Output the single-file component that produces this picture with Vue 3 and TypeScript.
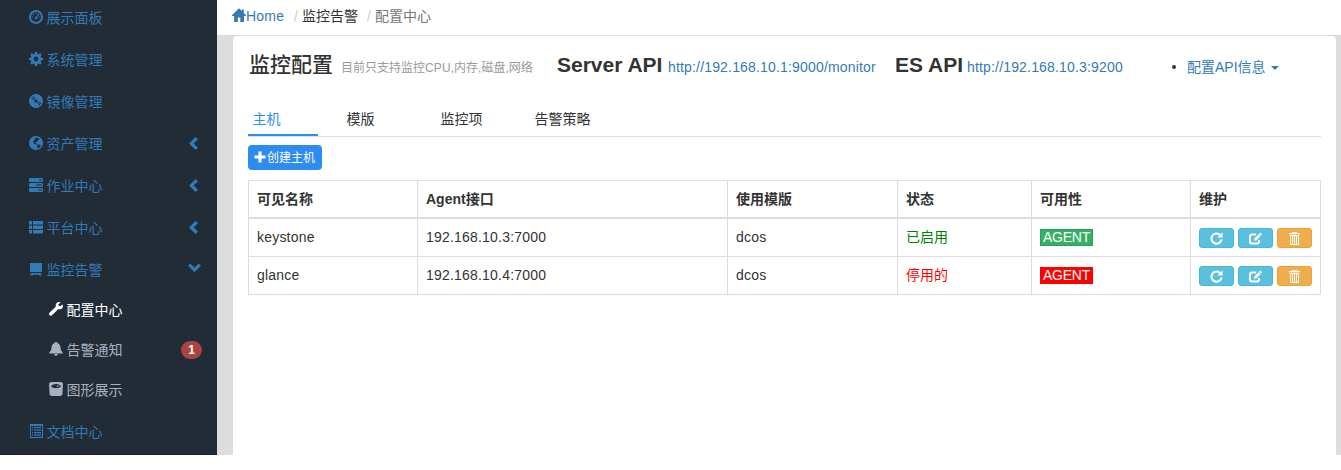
<script setup lang="ts">
interface MenuItem {
  label: string
  icon: string
  arrow?: 'left' | 'down'
  children?: { label: string; icon: string; active?: boolean; badge?: number }[]
}

const icons: Record<string, string> = {
  dashboard:
    'M7 0a7 7 0 1 0 0 14A7 7 0 0 0 7 0zm0 1.900a5.100 5.100 0 1 1 0 10.200A5.100 5.100 0 0 1 7 1.900zM6.500 2.600h1v1.400h-1zM3.500 4.200l.8-.7 1 1-.8.8zM2.600 6.600h1.400v1H2.600zM10 6.600h1.400v1H10zM9.300 3.500l.9.5-1.900 3.300a1.300 1.300 0 1 1-1-.6z',
  cog: 'M5.900 0h2.200l.4 2 1 .4 1.700-1.100 1.500 1.500-1.100 1.700.4 1 2 .4v2.200l-2 .4-.4 1 1.100 1.700-1.500 1.500-1.700-1.100-1 .4-.4 2H5.900l-.4-2-1-.4-1.700 1.100-1.500-1.500 1.100-1.700-.4-1-2-.4V5.900l2-.4.4-1L1.300 2.800l1.500-1.500 1.700 1.100 1-.4zM7 4.600a2.400 2.400 0 1 0 0 4.800 2.400 2.400 0 0 0 0-4.800z',
  cd: 'M7 0a7 7 0 1 0 0 14A7 7 0 0 0 7 0zm0 5.200a1.800 1.800 0 1 1 0 3.600 1.800 1.800 0 0 1 0-3.600zM2 4.600l.7-1 2.400 1.700-.6.8zM3.500 2.800l.8-.7 1.800 2.300-.7.5zM8.500 9.500l.8-.6 2 2.200-.9.7zM9.600 8.400l.4-.8 2.400 1.600-.5.9z',
  globe:
    'M7 0a7 7 0 1 0 0 14A7 7 0 0 0 7 0zM6.200 2.200l1.500-.7 2.400 1.100.3 1.100-1.500.5-.6 1.300-1.300.4-.5 1.200 1.400.9-.4.7-2-.7-1.200-1.700.4-2.100 1-.5zM8 8.800l2.300-.4 1.500.8-.7 1.800-1.900 1.400-1-.7.4-1.300z',
  tasks:
    'M.8 0h12.400l.8.8v2.400l-.8.8H.8L0 3.200V.8zM10 1.400v1h3v-1zM.8 5h12.400l.8.8v2.400l-.8.8H.8L0 8.200V5.800zM7 6.400v1h6v-1zM.8 10h12.400l.8.8v2.400l-.8.8H.8L0 13.200v-2.400zM9 11.400v1h4v-1z',
  list: 'M0 1h3v3.400H0zM4 1h10v3.400H4zM0 5.400h3v3.500H0zM4 5.400h10v3.500H4zM0 10h3v3.500H0zM4 10h10v3.500H4z',
  board: 'M1 1h12v9H1zM1 11h12v.8h-2l2 2h-2.200l-1-1H4.200l-1 1H1l2-2H1z',
  wrench:
    'M13.500 2.500l-2.300 1.700-1.500-.4-.3-1.500L11.600.4C9.700-.4 7.600.4 6.900 2.200c-.3.8-.3 1.600 0 2.300L.7 10.500c-.9.9-.9 1.900-.2 2.700.8.8 1.900.8 2.700-.1l6.200-6c1.900.6 3.900-.3 4.500-2.200.2-.8.1-1.600-.4-2.400z',
  bell: 'M7 0c.7 0 1.200.4 1.300 1 1.800.6 2.800 2 3.100 4l.5 3 1.800 2.500v.9H.3v-.9L2.100 8l.5-3c.3-2 1.300-3.400 3.100-4 .1-.6.6-1 1.300-1zM5.100 12h3.800c-.3 1.200-.9 1.800-1.900 1.800S5.400 13.200 5.100 12z',
  scale:
    'M2 0h10.500L14 1.500l-.6 10.500c-.2 1.300-1 2-2.100 2H2.700c-1.300 0-2-.7-2.100-2L0 1.500zM7.200 2C4.300 2 2.500 3.200 2.200 4.500c.8 1 2.400 1.700 4.800 1.700s4-.8 4.700-1.700C11.400 3.100 9.800 2 7.200 2zM7.200 4.400l2-1.500.7.7-1.600 1.300z',
  doc: 'M1 0h13v14H1zM2 2v11h11V2zM3 3h1v1.200H3zM5 3h7v1.200H5zM3 5.500h1v1.200H3zM5 5.500h7v1.200H5zM3 8h1v1.200H3zM5 8h7v1.200H5zM3 10.500h1v1.200H3zM5 10.500h7v1.200H5z',
  home: 'M7 .2L0 7.300v.8h2.100V14h3.700V9.500h2.500V14H12V8.100h2v-.8l-2.200-2.200V1.400H9.900v1.700z',
}

const menu: MenuItem[] = [
  { label: '展示面板', icon: 'dashboard' },
  { label: '系统管理', icon: 'cog' },
  { label: '镜像管理', icon: 'cd' },
  { label: '资产管理', icon: 'globe', arrow: 'left' },
  { label: '作业中心', icon: 'tasks', arrow: 'left' },
  { label: '平台中心', icon: 'list', arrow: 'left' },
  {
    label: '监控告警',
    icon: 'board',
    arrow: 'down',
    children: [
      { label: '配置中心', icon: 'wrench', active: true },
      { label: '告警通知', icon: 'bell', badge: 1 },
      { label: '图形展示', icon: 'scale' },
    ],
  },
  { label: '文档中心', icon: 'doc' },
]

const tabs = ['主机', '模版', '监控项', '告警策略']

const hosts = [
  { name: 'keystone', agent: '192.168.10.3:7000', template: 'dcos', status: '已启用', on: true },
  { name: 'glance', agent: '192.168.10.4:7000', template: 'dcos', status: '停用的', on: false },
]
</script>

<template>
  <div class="page">
    <nav class="sidebar">
      <template v-for="item in menu" :key="item.label">
        <a class="item">
          <svg class="icon" viewBox="0 0 14 14"><path :d="icons[item.icon]" fill-rule="evenodd" /></svg>
          <span class="label">{{ item.label }}</span>
          <svg v-if="item.arrow === 'left'" class="arrow left" viewBox="0 0 10 13">
            <path d="M6.500 0L0 6.500 6.500 13 9 10.700 4.700 6.500 9 2.300z" />
          </svg>
          <svg v-if="item.arrow === 'down'" class="arrow down" viewBox="0 0 13 10">
            <path d="M0 2.700L2.300.4l4.200 4.200L10.700.4 13 2.700 6.500 9.300z" />
          </svg>
        </a>
        <a v-for="sub in item.children" :key="sub.label" class="item sub" :class="{ active: sub.active }">
          <svg class="icon" viewBox="0 0 14 14"><path :d="icons[sub.icon]" fill-rule="evenodd" /></svg>
          <span class="label">{{ sub.label }}</span>
          <span v-if="sub.badge" class="badge">{{ sub.badge }}</span>
        </a>
      </template>
    </nav>

    <main class="main">
      <header class="crumbs">
        <svg class="icon" viewBox="0 0 14 14"><path :d="icons.home" fill-rule="evenodd" /></svg>
        <a class="link">Home</a>
        <span class="slash first">/</span>
        <span class="parent">监控告警</span>
        <span class="slash">/</span>
        <span class="current">配置中心</span>
      </header>

      <section class="panel">
        <div class="heading">
          <h3 class="title">监控配置</h3>
          <small class="note">目前只支持监控<i>CPU,</i>内存,磁盘,网络</small>
          <h3 class="server">Server API</h3>
          <a class="url server-url">http://192.168.10.1:9000/monitor</a>
          <h3 class="es">ES API</h3>
          <a class="url es-url">http://192.168.10.3:9200</a>
          <span class="bullet"></span>
          <a class="config">配置API信息</a>
          <span class="caret"></span>
        </div>

        <div class="tabs">
          <a v-for="(tab, i) in tabs" :key="tab" class="tab" :class="{ selected: i === 0 }">{{ tab }}</a>
        </div>

        <button class="create">
          <svg viewBox="0 0 12 12"><path d="M4.400.5h3.200v3.900h3.900v3.200H7.600v3.900H4.400V7.600H.5V4.400h3.900z" /></svg>
          <span>创建主机</span>
        </button>

        <table class="hosts">
          <colgroup>
            <col class="c1" /><col class="c2" /><col class="c3" /><col class="c4" /><col class="c5" /><col class="c6" />
          </colgroup>
          <thead>
            <tr>
              <th>可见名称</th>
              <th>Agent接口</th>
              <th>使用模版</th>
              <th>状态</th>
              <th>可用性</th>
              <th>维护</th>
            </tr>
          </thead>
          <tbody>
            <tr v-for="host in hosts" :key="host.name">
              <td class="text">{{ host.name }}</td>
              <td class="text">{{ host.agent }}</td>
              <td class="text">{{ host.template }}</td>
              <td class="text"><div class="status" :class="{ on: host.on }">{{ host.status }}</div></td>
              <td><div class="agent" :class="{ on: host.on }">AGENT</div></td>
              <td>
                <div class="actions">
                  <button class="act info">
                    <svg viewBox="0 0 12 12">
                      <path d="M9.400 2.700A4.700 4.700 0 1 0 10.700 7" fill="none" stroke="#fff" stroke-width="1.900" />
                      <path d="M11.600.3v4.800H6.800z" />
                    </svg>
                  </button>
                  <button class="act info">
                    <svg viewBox="0 0 13 12">
                      <path
                        d="M7 2H3Q1 2 1 4v5q0 2 2 2h5q2 0 2-2V7.600"
                        fill="none"
                        stroke="#fff"
                        stroke-width="1.900"
                      />
                      <path d="M5 8.300l.6-2.600L9.700 1.600l2 2-4.100 4.100zM10.200 1.100L11.300 0 13 1.900l-1 1.100z" />
                    </svg>
                  </button>
                  <button class="act warn">
                    <svg viewBox="0 0 13 13">
                      <path
                        fill-rule="evenodd"
                        d="M4 0h5v1h3v1.200H1V1h3zM5 .7V1h3V.7zM2 3h9v10H2zM3 4v8h1V4zM5 4v8h1V4zM7 4v8h1V4zM9 4v8h1V4z"
                      />
                    </svg>
                  </button>
                </div>
              </td>
            </tr>
          </tbody>
        </table>
      </section>
    </main>
  </div>
</template>

<style>
body {
  margin: 0;
  background: #fff;
}
</style>

<style scoped>
* {
  box-sizing: border-box;
}
.page {
  display: flex;
  width: 1341px;
  height: 455px;
  overflow: hidden;
  font: 14px/20px 'Liberation Sans', 'Noto Sans CJK SC', sans-serif;
  color: #333;
}
.sidebar {
  flex: none;
  width: 217px;
  height: 455px;
  background: #212c36;
  border-bottom: 1px solid #1a242f;
  overflow: hidden;
}
.item {
  display: flex;
  align-items: center;
  height: 42px;
  padding: 0 15px 0 29px;
  color: #337ab7;
}
.item:first-child {
  margin-top: -3px;
}
.item.sub {
  height: 40px;
  padding-left: 49px;
  padding-bottom: 2px;
  color: #a7b1c2;
}
.item.sub.active {
  color: #fff;
}
.icon {
  flex: none;
  width: 14px;
  height: 14px;
  fill: currentColor;
  margin-top: -2px;
}
.label {
  margin-left: 3.5px;
  white-space: nowrap;
}
.arrow {
  margin-left: auto;
  fill: currentColor;
}
.arrow.left {
  width: 10px;
  height: 13px;
  margin-right: 3px;
  margin-top: -2px;
}
.arrow.down {
  width: 13px;
  height: 10px;
  margin-right: 1px;
  margin-top: -5px;
}
.badge {
  margin-left: auto;
  width: 21px;
  height: 18px;
  border-radius: 9px;
  background: #a94442;
  color: #fff;
  font-size: 12px;
  font-weight: bold;
  line-height: 18px;
  text-align: center;
}
.main {
  flex: 1;
  display: flex;
  flex-direction: column;
  background: #ddd;
}
.crumbs {
  display: flex;
  align-items: center;
  height: 36px;
  padding: 0 15px 4px;
  background: #fff;
  border-bottom: 1px solid #d9dadf;
}
.crumbs .icon {
  color: #337ab7;
  margin-top: -1px;
}
.link {
  width: 46px;
  color: #337ab7;
  letter-spacing: 0.2px;
}
.slash {
  width: 16px;
  padding-left: 8px;
  color: #ccc;
}
.slash.first {
  width: 10px;
  padding-left: 2px;
}
.parent {
  width: 57px;
}
.current {
  color: #777;
}
.panel {
  flex: 1;
  margin: 0 5px 0 16px;
  padding: 0 15px;
  background: #fff;
  border-radius: 4px 4px 0 0;
}
.heading {
  display: flex;
  align-items: baseline;
  height: 67px;
  padding-top: 16px;
  white-space: nowrap;
}
h3 {
  flex: none;
  margin: 0;
  font-size: 21px;
  line-height: 26px;
}
.title {
  width: 93px;
  padding-left: 1px;
  font-weight: 500;
}
.note {
  flex: none;
  width: 216px;
  font-size: 12px;
  color: #999;
}
.note i {
  font-style: normal;
  letter-spacing: 0.1px;
}
.server {
  width: 111px;
}
.url {
  flex: none;
  color: #337ab7;
  letter-spacing: 0.17px;
}
.server-url {
  width: 227px;
}
.es {
  width: 72px;
}
.es-url {
  width: 205px;
}
.bullet {
  flex: none;
  width: 4px;
  height: 4px;
  border-radius: 2px;
  background: #333;
  margin-right: 11px;
  position: relative;
  top: -3px;
}
.config {
  flex: none;
  color: #337ab7;
  margin-right: 5px;
}
.caret {
  align-self: baseline;
  border: 4px solid transparent;
  border-top-color: #337ab7;
  border-bottom: 0;
  position: relative;
  top: -2px;
}
.tabs {
  display: flex;
  gap: 24px;
  height: 34px;
  border-bottom: 1px solid #d7dde4;
}
.tab {
  width: 70px;
  height: 33px;
  padding: 6px 4.5px 0;
  white-space: nowrap;
}
.tab.selected {
  color: #2d8cf0;
  border-bottom: 2px solid #2d8cf0;
}
.create {
  display: flex;
  align-items: center;
  width: 74px;
  height: 25px;
  margin: 8px 0 10px;
  padding: 0 6px;
  border: 0;
  border-radius: 4px;
  background: #2d8cf0;
  color: #fff;
  font: inherit;
  font-size: 12px;
  white-space: nowrap;
}
.create svg {
  flex: none;
  width: 12px;
  height: 12px;
  margin: -1px 1px 0 0;
  fill: #fff;
}
.hosts {
  width: 1073px;
  table-layout: fixed;
  border-collapse: collapse;
}
.c1 {
  width: 169px;
}
.c2 {
  width: 310px;
}
.c3 {
  width: 170px;
}
.c4 {
  width: 134px;
}
.c5 {
  width: 159px;
}
.c6 {
  width: 130px;
}
th,
td {
  height: 38px;
  padding: 0 8px;
  border: 1px solid #ddd;
  text-align: left;
  vertical-align: middle;
}
th {
  height: 37px;
  padding-top: 1px;
  border-bottom-width: 2px;
}
td {
  letter-spacing: 0.2px;
}
tbody tr:first-child td {
  height: 39px;
  padding-top: 1px;
}
td.text {
  padding-bottom: 2px;
}
.status {
  color: #f00;
  letter-spacing: 0;
}
.status.on {
  color: #008000;
}
.agent {
  width: 53px;
  height: 17px;
  border: 1px solid #f00;
  background: #f00;
  color: #fff;
  line-height: 14px;
  letter-spacing: -0.2px;
  text-align: center;
}
.agent.on {
  border-color: #2b9f5c;
  background: #36b067;
}
.actions {
  display: flex;
  gap: 4px;
}
.act {
  display: flex;
  align-items: center;
  justify-content: center;
  width: 35px;
  height: 20px;
  padding: 1px 0 0;
  border: 1px solid #46b8da;
  border-radius: 3px;
  background: #5bc0de;
}
.act svg {
  width: 13px;
  height: 13px;
  fill: #fff;
}
.act.warn {
  border-color: #eea236;
  background: #f0ad4e;
}
</style>
